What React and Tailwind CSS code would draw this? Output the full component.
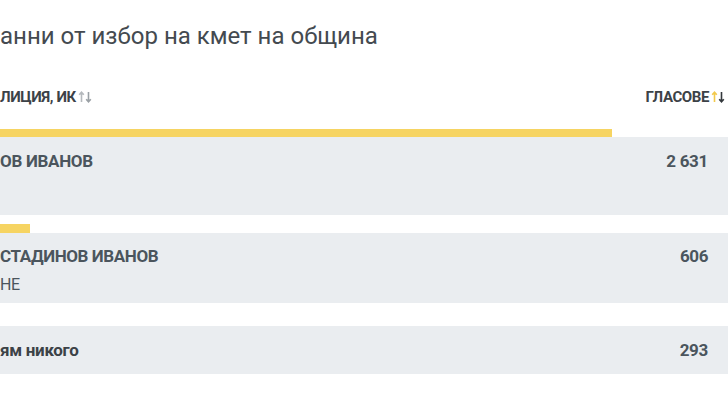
import React from "react";

const rb = { fontFamily: "Roboto, sans-serif" };

function Arrows({ up, down }) {
  return (
    <svg width="14" height="14" viewBox="0 0 14 14" className="ml-[2px]">
      <path d="M3.5 12V2.5M1.2 4.8L3.5 2.2L5.8 4.8" fill="none" stroke={up} strokeWidth="1.6" />
      <path d="M10.5 2V11.5M8.2 9.2L10.5 11.8L12.8 9.2" fill="none" stroke={down} strokeWidth="1.6" />
    </svg>
  );
}

export default function App() {
  return (
    <div className="w-[728px] h-[409px] overflow-hidden bg-white text-[#4b555d]" style={rb}>
      <div className="pt-[20px] h-[60px] text-[24px] leading-[32px] text-[#444a50]">
        анни от избор на кмет на община
      </div>
      <div className="mt-[27px] flex justify-between items-center h-[20px] pr-[3px]">
        <div className="flex items-center text-[15px] font-bold tracking-[-0.4px] text-[#3c4247]">
          ЛИЦИЯ, ИК
          <Arrows up="#b5b9bd" down="#9aa0a5" />
        </div>
        <div className="flex items-center text-[15px] font-bold tracking-[-0.4px] text-[#3c4247]">
          ГЛАСОВЕ
          <Arrows up="#f2c94c" down="#33383c" />
        </div>
      </div>
      <div className="mt-[22px]">
        <div className="h-[8px] w-[612px] bg-[#f6d462]" />
        <div className="h-[78px] bg-[#eaedf0] flex justify-between pt-[14px] pr-[20px] tracking-[-0.3px]">
          <div className="text-[17px] font-bold leading-[20px]">ОВ ИВАНОВ</div>
          <div className="text-[17px] font-bold leading-[20px]">2 631</div>
        </div>
        <div className="h-[9px]" />
        <div className="h-[9px] w-[30px] bg-[#f6d462]" />
        <div className="h-[70px] bg-[#eaedf0] flex justify-between pt-[13px] pr-[20px] tracking-[-0.4px]">
          <div className="flex flex-col">
            <div className="text-[17px] font-bold leading-[20px]">СТАДИНОВ ИВАНОВ</div>
            <div className="text-[16px] leading-[20px] mt-[9px]">НЕ</div>
          </div>
          <div className="text-[17px] font-bold leading-[20px]">606</div>
        </div>
        <div className="h-[23px]" />
        <div className="h-[48px] bg-[#eaedf0] flex justify-between items-center pr-[20px] tracking-[-0.3px]">
          <div className="text-[17px] font-bold leading-[20px] text-[#3c4247]">ям никого</div>
          <div className="text-[17px] font-bold leading-[20px]">293</div>
        </div>
      </div>
    </div>
  );
}
